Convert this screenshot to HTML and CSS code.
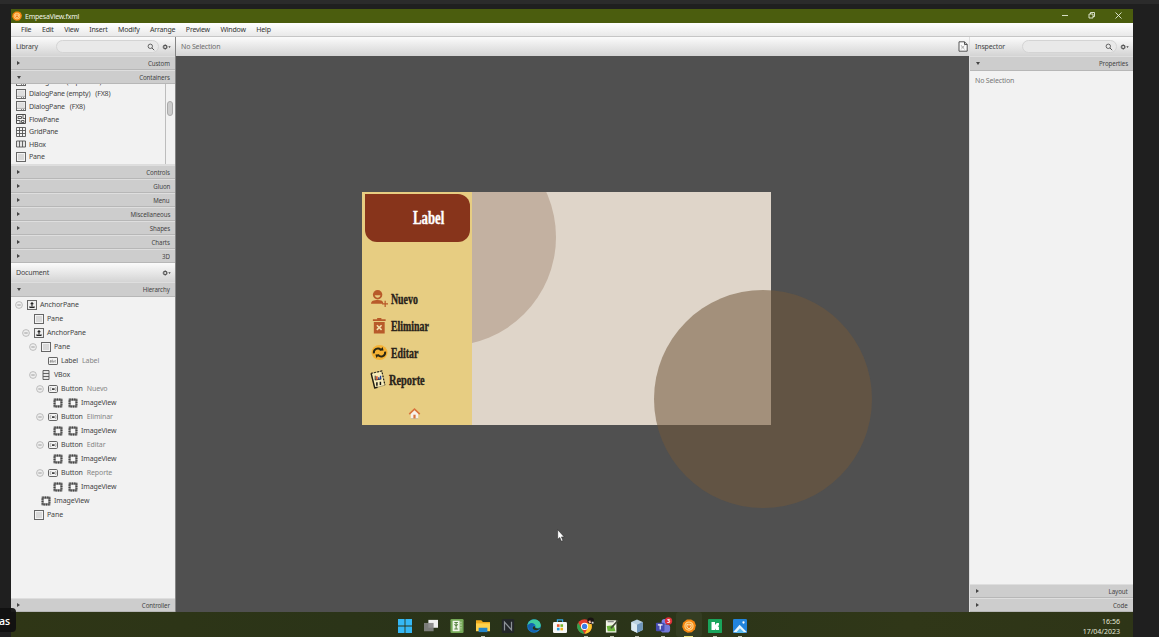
FILE: index.html
```html
<!DOCTYPE html>
<html lang="es">
<head>
<meta charset="utf-8">
<title>EmpesaView.fxml</title>
<link rel="stylesheet" href="styles.css">
</head>
<body>
<svg class="defs" width="0" height="0">
  <symbol id="pane" viewBox="0 0 10 10"><rect x=".5" y=".5" width="9" height="9" fill="#f4f4f4" stroke="#666"/><rect x="2" y="2" width="6" height="6" fill="#d9d9d9"/></symbol>
  <symbol id="dialog" viewBox="0 0 10 10"><rect x=".5" y=".5" width="9" height="9" fill="#f4f4f4" stroke="#666"/><rect x="1.5" y="1.5" width="7" height="5" fill="#dedede"/><path d="M1 7.300h8" stroke="#888" stroke-width=".7"/><path d="M5 8.500h1M7 8.500h1" stroke="#666" stroke-width=".8"/></symbol>
  <symbol id="flow" viewBox="0 0 10 10"><path d="M.5.5h9v9h-9z" fill="#f4f4f4" stroke="#4b4b4b"/><path d="M2 2.500h3.500v2H2zM7 1v3.500h2M1 6.500h3v3M5.500 6.500H8v2H5.500z" fill="none" stroke="#4b4b4b" stroke-width=".9"/></symbol>
  <symbol id="grid" viewBox="0 0 10 10"><path d="M.5.5h9v9h-9zM.5 3.5h9M.5 6.5h9M3.5.5v9M6.5.5v9" fill="#f4f4f4" stroke="#555" stroke-width=".9"/></symbol>
  <symbol id="hbox" viewBox="0 0 10 10"><path d="M.5 2h9v6h-9zM3.5 2v6M6.5 2v6" fill="#e6e6e6" stroke="#555" stroke-width=".9"/></symbol>
  <symbol id="vbox" viewBox="0 0 10 10"><path d="M2 .5h6v9H2zM2 3.5h6M2 6.5h6" fill="#e6e6e6" stroke="#555" stroke-width=".9"/></symbol>
  <symbol id="anchor" viewBox="0 0 10 10"><rect x=".5" y=".5" width="9" height="9" fill="#eee" stroke="#666"/><path d="M5 2v6M3.600 3.600h2.800M3 6.300v1.200h4V6.300" fill="none" stroke="#222" stroke-width="1.1"/></symbol>
  <symbol id="label" viewBox="0 0 10 10"><rect x=".5" y="1.5" width="9" height="7" rx=".6" fill="#f4f4f4" stroke="#555" stroke-width=".9"/><path d="M2 4.5h1.3v1.7H2V5.4h1M4.4 3.6v2.6h1.2V4.7M7.800 4.600h-1v1.500h1" fill="none" stroke="#777" stroke-width=".6"/></symbol>
  <symbol id="button" viewBox="0 0 10 10"><rect x=".5" y="1.5" width="9" height="7" rx="1.2" fill="#f4f4f4" stroke="#555" stroke-width=".9"/><path d="M3.400 3.700H2.200v2.600h1.200M7 3.700h1v2.600H7" fill="none" stroke="#888" stroke-width=".6"/><path d="M4 4.200h2.600v1.800H4z" fill="#444"/></symbol>
  <symbol id="image" viewBox="0 0 10 10"><path d="M1.500 1.500h7v7h-7z" fill="#f6f6f6" stroke="#8a8a8a" stroke-width="1.900"/><path d="M1.500 1.500h7v7h-7z" fill="none" stroke="#444" stroke-width="1.900" stroke-dasharray="1.170"/><path d="M2.500 2.500h5v5h-5z" fill="none" stroke="#666" stroke-width=".4"/></symbol>
  <symbol id="minus" viewBox="0 0 8 8"><circle cx="4" cy="4" r="3.400" fill="#eee" stroke="#b0b0b0" stroke-width=".8"/><path d="M2.300 4h3.400" stroke="#888" stroke-width=".8"/></symbol>
  <symbol id="glass" viewBox="0 0 8 8"><circle cx="3.300" cy="3.300" r="2.200" fill="none" stroke="#555" stroke-width=".9"/><path d="M5 5l2.200 2.200" stroke="#555" stroke-width="1"/></symbol>
  <symbol id="gear" viewBox="0 0 9 8"><circle cx="3.200" cy="4" r="1.600" fill="none" stroke="#555" stroke-width="1.100"/><path d="M3.200 1.300v.8M3.200 5.900v.8M.5 4h.8M5.100 4h.8M1.300 2.100l.6.6M4.500 5.300l.6.6M1.300 5.900l.6-.6M4.500 2.700l.6-.6" stroke="#555" stroke-width=".8"/><path d="M6.300 3.300h2.400L7.500 4.900z" fill="#444"/></symbol>
  <symbol id="builder" viewBox="0 0 16 16"><path d="M5.600.6h4.800l3.900 2.300 1.500 4.300-1 4.500-3.500 3.300-4.900.6-4.100-2.300L.2 9l.9-4.700z" fill="#f6860f"/><circle cx="8" cy="8.100" r="4.700" fill="#fb9d2c" stroke="#ffd890" stroke-width="1.200"/><path d="M5.700 6l1.100.7h2.400l1.100-.7v3.300L8 11.300 5.700 9.300z" fill="#f37b16" stroke="#ffe9bd" stroke-width="1"/></symbol>
</svg>

<div class="top-strip"></div>
<main class="window">
  <header class="titlebar">
    <svg class="app-icon"><use href="#builder"/></svg>
    <span class="title">EmpesaView.fxml</span>
    <svg class="win-buttons" viewBox="0 0 62 10"><path d="M0 5.500h6M53.500 2.500l6 6M59.500 2.500l-6 6" stroke="#e8eedb" stroke-width=".9"/><path d="M27 4h4v4h-4zM28.500 4V2.500h4v4H31" fill="none" stroke="#e8eedb" stroke-width=".9"/></svg>
  </header>
  <nav class="menubar"><span>File</span><span>Edit</span><span>View</span><span>Insert</span><span>Modify</span><span>Arrange</span><span>Preview</span><span>Window</span><span>Help</span></nav>

  <div class="workspace">
    <aside class="side left">
      <div class="bar"><span>Library</span><div class="search"><svg><use href="#glass"/></svg></div><svg class="gear"><use href="#gear"/></svg></div>
      <div class="section"><i class="tri"></i><span>Custom</span></div>
      <div class="section"><i class="tri open"></i><span>Containers</span></div>
      <div class="library">
        <div class="items">
          <div class="item"><svg><use href="#dialog"/></svg><span>DialogPane (expanded)</span></div>
          <div class="item"><svg><use href="#dialog"/></svg><span>DialogPane (empty)</span><span>(FX8)</span></div>
          <div class="item"><svg><use href="#dialog"/></svg><span>DialogPane</span><span>(FX8)</span></div>
          <div class="item"><svg><use href="#flow"/></svg><span>FlowPane</span></div>
          <div class="item"><svg><use href="#grid"/></svg><span>GridPane</span></div>
          <div class="item"><svg><use href="#hbox"/></svg><span>HBox</span></div>
          <div class="item"><svg><use href="#pane"/></svg><span>Pane</span></div>
        </div>
        <div class="scroll"><div class="thumb"></div></div>
      </div>
      <div class="section"><i class="tri"></i><span>Controls</span></div>
      <div class="section"><i class="tri"></i><span>Gluon</span></div>
      <div class="section"><i class="tri"></i><span>Menu</span></div>
      <div class="section"><i class="tri"></i><span>Miscellaneous</span></div>
      <div class="section"><i class="tri"></i><span>Shapes</span></div>
      <div class="section"><i class="tri"></i><span>Charts</span></div>
      <div class="section"><i class="tri"></i><span>3D</span></div>
      <div class="bar"><span>Document</span><svg class="gear"><use href="#gear"/></svg></div>
      <div class="section tall"><i class="tri open"></i><span>Hierarchy</span></div>
      <div class="tree">
        <div class="node d0"><svg class="fold"><use href="#minus"/></svg><svg><use href="#anchor"/></svg><span>AnchorPane</span></div>
        <div class="node d1 leaf"><svg><use href="#pane"/></svg><span>Pane</span></div>
        <div class="node d1"><svg class="fold"><use href="#minus"/></svg><svg><use href="#anchor"/></svg><span>AnchorPane</span></div>
        <div class="node d2"><svg class="fold"><use href="#minus"/></svg><svg><use href="#pane"/></svg><span>Pane</span></div>
        <div class="node d3 leaf"><svg><use href="#label"/></svg><span>Label</span><em>Label</em></div>
        <div class="node d2"><svg class="fold"><use href="#minus"/></svg><svg><use href="#vbox"/></svg><span>VBox</span></div>
        <div class="node d3"><svg class="fold"><use href="#minus"/></svg><svg><use href="#button"/></svg><span>Button</span><em>Nuevo</em></div>
        <div class="node d4"><svg><use href="#image"/></svg><svg><use href="#image"/></svg><span>ImageView</span></div>
        <div class="node d3"><svg class="fold"><use href="#minus"/></svg><svg><use href="#button"/></svg><span>Button</span><em>Eliminar</em></div>
        <div class="node d4"><svg><use href="#image"/></svg><svg><use href="#image"/></svg><span>ImageView</span></div>
        <div class="node d3"><svg class="fold"><use href="#minus"/></svg><svg><use href="#button"/></svg><span>Button</span><em>Editar</em></div>
        <div class="node d4"><svg><use href="#image"/></svg><svg><use href="#image"/></svg><span>ImageView</span></div>
        <div class="node d3"><svg class="fold"><use href="#minus"/></svg><svg><use href="#button"/></svg><span>Button</span><em>Reporte</em></div>
        <div class="node d4"><svg><use href="#image"/></svg><svg><use href="#image"/></svg><span>ImageView</span></div>
        <div class="node d2 leaf"><svg><use href="#image"/></svg><span>ImageView</span></div>
        <div class="node d1 leaf"><svg><use href="#pane"/></svg><span>Pane</span></div>
      </div>
      <div class="section"><i class="tri"></i><span>Controller</span></div>
    </aside>

    <section class="center">
      <div class="bar selection"><span>No Selection</span>
        <svg class="doc" viewBox="0 0 10 11"><path d="M1 .8h5.500l2.700 2.700v6.700H1z" fill="#fafafa" stroke="#444" stroke-width=".9"/><path d="M6.500.8v2.700h2.700" fill="none" stroke="#444" stroke-width=".9"/><path d="M3 4l3.500 4.500M6.500 4.500L3 8.500M3 6h3" stroke="#999" stroke-width=".6"/></svg>
      </div>
      <div class="canvas">
        <div class="form">
          <div class="arc"></div>
          <div class="drawer">
            <div class="banner"><span class="fat">Label</span></div>
            <div class="actions">
              <div class="action"><svg viewBox="0 0 18 18"><g fill="#b85a2a"><circle cx="7" cy="5" r="5"/><path d="M0 14.500c0-3 3-4 7-4s6 1 6 4z"/></g><path d="M4 5.500h6c-.5 3.500-5.500 3.500-6 0z" fill="#e7cd82"/><path d="M15 11.500v6.500M11.700 14.800h6.300" stroke="#b85a2a" stroke-width="1.300"/></svg><span class="fat">Nuevo</span></div>
              <div class="action"><svg viewBox="0 0 18 18"><path d="M2 2.500h13.500v1.700H2zM6.500 1h4.500v2H6.500zM3 5.200h11.500V17.500H3z" fill="#b85a2a"/><path d="M6.200 8.700l5 5M11.200 8.700l-5 5" stroke="#f2dfac" stroke-width="1.700"/></svg><span class="fat">Eliminar</span></div>
              <div class="action"><svg viewBox="0 0 18 18"><ellipse cx="9" cy="9" rx="8.500" ry="8" fill="#f6b233"/><path d="M3 10c-.5-5 4.500-6.500 7.500-4M15 8c.5 5-4.500 6.500-7.500 4" fill="none" stroke="#2b2814" stroke-width="2.100"/><path d="M9 7.200l4.300-.2-1-3.800zM9 10.800l-4.300.2 1 3.800z" fill="#2b2814"/></svg><span class="fat">Editar</span></div>
              <div class="action report"><svg viewBox="0 0 18 20"><path d="M1.200 3.500L12.500 1l3.300 15L5 19z" fill="#f7ebb8" stroke="#6d6340" stroke-width=".5"/><path d="M1.200 3.500L5 19l3-.8" fill="none" stroke="#211d12" stroke-width="1.500"/><path d="M1.200 3.500L12.500 1l3.300 15" fill="none" stroke="#211d12" stroke-width="1.200" stroke-dasharray="1.800 1.500"/><path d="M5.500 6v4.500l6.500-1" fill="none" stroke="#222" stroke-width="1"/><path d="M7.300 6.500v3.700" stroke="#d34a25" stroke-width="1.600"/><path d="M9.300 7.500v2.500M11.200 6v3.500" stroke="#22409a" stroke-width="1.400"/><path d="M7.300 13v3.500M11 12.300v3.500" stroke="#111" stroke-width="1.600"/></svg><span class="fat">Reporte</span></div>
            </div>
            <svg class="home" viewBox="0 0 14 14"><path d="M3 7l4-4 4 4v5.500H3z" fill="#f7f1ea"/><path d="M1.300 7.700L7 2.300l5.700 5.400" fill="none" stroke="#d9733d" stroke-width="1.600"/><path d="M5.800 8.300h2.400v4.200H5.800z" fill="#d9733d"/><path d="M3 12.500h8" stroke="#b9a98f" stroke-width=".6"/></svg>
          </div>
        </div>
        <div class="disc"></div>
        <svg class="cursor" viewBox="0 0 8 13"><path d="M.7.700v9.600l2.100-1.900 1.600 3.900 1.600-.7-1.600-3.700h2.800z" fill="#fff" stroke="#222" stroke-width=".5"/></svg>
      </div>
    </section>

    <aside class="side right">
      <div class="bar"><span>Inspector</span><div class="search"><svg><use href="#glass"/></svg></div><svg class="gear"><use href="#gear"/></svg></div>
      <div class="section tall"><i class="tri open"></i><span>Properties</span></div>
      <div class="empty">No Selection</div>
      <div class="section"><i class="tri"></i><span>Layout</span></div>
      <div class="section"><i class="tri"></i><span>Code</span></div>
    </aside>
  </div>

  <footer class="taskbar">
    <div class="apps">
      <div class="app"><svg viewBox="0 0 16 16"><path d="M0 0h7.500v7.500H0zM8.500 0H16v7.500H8.500zM0 8.500h7.500V16H0zM8.500 8.500H16V16H8.500z" fill="#35b8f5"/></svg></div>
      <div class="app"><svg viewBox="0 0 16 16"><path d="M5 1h11v9H5z" fill="#f0f0f0"/><path d="M0 4.500h11V14H0z" fill="#858585" opacity=".9"/></svg></div>
      <div class="app"><svg viewBox="0 0 16 16"><rect x=".5" width="15" height="16" rx="1.500" fill="#75a957"/><path d="M3 2h8v12H3z" fill="#eff5e7"/><path d="M5 4h4M5 11.500h4M7 4v8M5 6l2 2 2-2" stroke="#568341" stroke-width="1.200" fill="none"/><path d="M12.500 3v10" stroke="#dcebd0" stroke-dasharray="2 1"/></svg></div>
      <div class="app run"><svg viewBox="0 0 16 16"><path d="M0 1.500h6l2 2h8v10H0z" fill="#eda91d"/><path d="M0 5h16v9H0z" fill="#ffd24c"/><path d="M3 10h10v5H3z" fill="#2586c9"/></svg></div>
      <div class="app"><svg viewBox="0 0 16 16"><rect x="1" width="14" height="16" rx="1.500" fill="#232629"/><path d="M4 13V3.500L12 12.500V3" fill="none" stroke="#8d9298" stroke-width="1.400"/></svg></div>
      <div class="app"><svg viewBox="0 0 16 16"><circle cx="8" cy="8" r="7.800" fill="#1681cf"/><path d="M.5 7C2-2 15-1.500 15.800 7c0 3.500-5 4-6 2 1-3-4-6-9.300-2z" fill="#3fcba0"/><path d="M1 7c4-4 7-2 8 0-4 0-4 6 3 6-4 4-11 1-11-6z" fill="#1562b0"/><path d="M9 8c-1 2 2 4 6.500 2.300C14 13 8 14 6.500 10.500c0-1.500 1-2.500 2.500-2.500z" fill="#263317"/></svg></div>
      <div class="app"><svg viewBox="0 0 16 16"><path d="M5 4V1h6v3" fill="none" stroke="#35a6e8" stroke-width="1.300"/><rect y="3.500" width="16" height="12.500" rx="1.500" fill="#f7f7f7"/><path d="M4.500 6h3v3h-3z" fill="#e9532d"/><path d="M8.500 6h3v3h-3z" fill="#77b82a"/><path d="M4.500 10h3v3h-3z" fill="#259dde"/><path d="M8.500 10h3v3h-3z" fill="#f5b51d"/></svg></div>
      <div class="app run"><svg class="wide" viewBox="0 0 18 18"><circle cx="8" cy="10" r="7.700" fill="#e33e2e"/><path d="M1.300 6L8 17.700A7.700 7.700 0 0 1 1.300 6z" fill="#32a350"/><path d="M8 6.500h6.900A7.700 7.700 0 0 1 8 17.700l3.500-6z" fill="#fbc82e"/><circle cx="8" cy="10" r="3.800" fill="#fff"/><circle cx="8" cy="10" r="2.800" fill="#3b7de8"/><circle cx="14.500" cy="4" r="3.500" fill="#191313"/><path d="M12 4.500l2-1 1 2.500-2 1z" fill="#f1b599"/><path d="M15.500 5h2v2h-2z" fill="#ddd"/></svg></div>
      <div class="app run"><svg viewBox="0 0 16 16"><path d="M1 1.500h12v14H1z" fill="#f1f3e6"/><path d="M2 8l8-1 2 7H3z" fill="#6bb33b"/><path d="M3 3h7" stroke="#8a8a8a" stroke-width="1.500"/><path d="M6 10l8-9 1.500 1.200-8 9z" fill="#434a38"/></svg></div>
      <div class="app run"><svg viewBox="0 0 16 16"><path d="M8 .5l6.500 3v9L8 15.800l-6.500-3.300v-9z" fill="#b9d0e0"/><path d="M1.500 3.500l6.500 3v9.300l-6.500-3.300z" fill="#dbe9f1"/><path d="M8 6.500l6.500-3v9L8 15.800z" fill="#6f96bb"/></svg></div>
      <div class="app run"><svg class="wide" viewBox="0 0 18 18"><circle cx="10" cy="5" r="3" fill="#7b83eb"/><rect x="6" y="8" width="10" height="8.500" rx="3" fill="#7379d7"/><rect x="1" y="6" width="9" height="9" rx="1" fill="#454bb0"/><path d="M3 8.300h5M5.500 8.300v5" stroke="#fff" stroke-width="1.200"/><circle cx="14.300" cy="4.200" r="3.900" fill="#dc2f3b"/><text x="14.300" y="6.500" text-anchor="middle" class="badge">3</text></svg></div>
      <div class="app run active"><svg><use href="#builder"/></svg></div>
      <div class="app run"><svg viewBox="0 0 16 16"><rect width="16" height="16" rx="1" fill="#19a45b"/><path d="M4 3.500h4v3.300L10 4.500h2.500v3L11 8l1.500 1v3.500H9l-1-2v2H4z" fill="#fff"/></svg></div>
      <div class="app run"><svg viewBox="0 0 16 16"><rect width="16" height="16" rx="1.500" fill="#2184dd"/><path d="M0 15L7.500 6.500 16 15z" fill="#e6f5ff"/><path d="M3 16l5-5.500 5.500 5.500z" fill="#59baf0"/><circle cx="12" cy="4" r="1.300" fill="#fff"/></svg></div>
    </div>
    <div class="clock"><span>16:56</span><span>17/04/2023</span></div>
  </footer>
</main>
<div class="caption">as</div>
</body>
</html>
```

FILE: styles.css
```css
* { box-sizing: border-box; }
body {
  margin: 0;
  width: 1159px;
  height: 637px;
  overflow: hidden;
  background: #1f1f1f;
  color: #444;
  font: 7px/10px "Noto Sans", "Open Sans", sans-serif;
}
svg { display: block; flex: none; overflow: visible; }
span, em { white-space: pre; }
.defs { position: absolute; }
.top-strip { height: 4px; background: #2b2b2b; }
.window { margin: 5px 0 0 11px; width: 1122px; height: 628px; display: flex; flex-direction: column; }

.titlebar { height: 14px; background: #4b5d0e; display: flex; align-items: center; padding: 0 9px 0 1px; color: #f1f4e8; }
.app-icon { width: 10px; height: 10px; margin-right: 3px; }
.title { padding-top: 1px; letter-spacing: -.22px; }
.win-buttons { width: 62px; height: 10px; margin-left: auto; margin-top: -2px; }

.menubar { height: 14px; display: flex; align-items: center; gap: 10.600px; padding: 1px 0 0 10px; background: linear-gradient(#fff, #e9e9e9); border-bottom: 1px solid #c6c6c6; color: #333; letter-spacing: -.21px; }

.workspace { height: 575px; display: flex; background: #505050; }
.side { width: 164px; display: flex; flex-direction: column; background: #f2f2f2; }
.center { width: 794px; border-left: 1px solid #858585; display: flex; flex-direction: column; }
.right { border-left: 1px solid #dedede; }

.bar { height: 19px; flex: none; display: flex; align-items: center; padding: 0 4px 0 5px; background: linear-gradient(#fbfbfb, #d4d4d4); letter-spacing: -.15px; }
.bar > span { padding-top: 1px; }
.search { width: 103px; height: 13px; margin-left: auto; border: 1px solid #d4d4d4; border-radius: 7px; background: #e9e9e9; display: flex; align-items: center; justify-content: flex-end; padding-right: 3px; }
.right .search { width: 95px; }
.search svg { width: 8px; height: 8px; }
.gear { width: 9px; height: 8px; margin-left: 3px; }
.bar > span + .gear { margin-left: auto; }
.selection { color: #6d6d6d; }
.doc { width: 10px; height: 11px; margin: 0 -3px 0 auto; }

.section { height: 14px; flex: none; display: flex; align-items: center; justify-content: space-between; padding: 0 5px 0 6px; background: #cdcdcd; border-top: 1px solid #dedede; border-bottom: 1px solid #b7b7b7; }
.section span { padding-top: 1px; letter-spacing: -.1px; transform: scaleX(.88); transform-origin: right center; }
.section.tall { height: 15px; }
.tri { width: 0; height: 0; border-left: 3.500px solid #444; border-top: 2px solid transparent; border-bottom: 2px solid transparent; }
.tri.open { border-left: 2px solid transparent; border-right: 2px solid transparent; border-top: 3.500px solid #444; border-bottom: 0; }

.library { height: 81px; flex: none; display: flex; border-bottom: 1px solid #ddd; overflow: hidden; }
.items { width: 154px; margin-top: -9px; display: flex; flex-direction: column; }
.item { height: 12.600px; flex: none; display: flex; align-items: center; padding-left: 5px; letter-spacing: -.18px; }
.item svg { width: 10px; height: 10px; margin-right: 3px; }
.item span { padding-top: 1px; }
.item span + span { margin-left: 5px; }
.scroll { width: 10px; border-left: 1px solid #bdbdbd; padding: 17px 0 0 1px; }
.thumb { width: 6px; height: 15px; border: 1px solid #aaa; border-radius: 3px; background: #ccc; }

.tree { flex: 1; padding-top: 1px; }
.node { height: 14px; display: flex; align-items: center; letter-spacing: -.12px; }
.node svg { width: 10px; height: 10px; margin-right: 4px; }
.node .fold { width: 8px; height: 8px; }
.node svg + span { margin-left: -1px; }
.node em { margin-left: 4px; font-style: normal; color: #858585; }
.d0 { padding-left: 4px; }
.d1 { padding-left: 11px; }
.d2 { padding-left: 18px; }
.d3 { padding-left: 25px; }
.d4 { padding-left: 42px; }
.d4 svg:first-child { margin-right: 5px; }
.d1.leaf { padding-left: 23px; }
.d2.leaf { padding-left: 30px; }
.d3.leaf { padding-left: 37px; }
.empty { flex: 1; padding: 5px 5px; color: #777; letter-spacing: -.17px; }

.canvas { position: relative; flex: 1; background: #505050; }
.form { position: absolute; left: 186px; top: 135.500px; width: 409px; height: 233.500px; overflow: hidden; background: #dfd5c9; }
.arc { position: absolute; left: -24px; top: -64px; width: 218px; height: 218px; border-radius: 50%; background: #c3b1a1; }
.disc { position: absolute; left: 478px; top: 234px; width: 218px; height: 218px; border-radius: 50%; background: rgba(113, 87, 58, .55); }
.cursor { position: absolute; left: 381px; top: 473px; width: 8px; height: 13px; }
.drawer { position: relative; width: 110px; height: 100%; background: #e7cd82; padding: 2.500px 2px 0 3px; }
.banner { height: 48px; border-radius: 0 12px 12px 12px; background: #87341b; color: #fff; display: flex; align-items: center; padding-left: 48px; }
.fat { font: bold 18px/20px "Liberation Serif", serif; -webkit-text-stroke: .4px currentColor; transform: scaleX(.71); transform-origin: left center; }
.actions { margin-top: 42.500px; }
.action { height: 27px; display: flex; align-items: center; padding-left: 6px; color: #29231a; }
.action svg { width: 17px; height: 17px; margin-right: 3px; }
.action .fat { padding-top: 1px; font-size: 14.500px; transform: scaleX(.68); }
.action.report { padding-left: 5px; }
.action.report svg { width: 17px; height: 19px; margin-right: 2px; }
.action.report .fat { transform: scaleX(.715); }
.home { width: 13px; height: 13px; margin: 14px 0 0 43px; }

.taskbar { height: 25px; display: flex; padding-left: 381.500px; background: linear-gradient(90deg, #2f3616, #293319 45%, #303718 80%, #2e3517); }
.apps { display: flex; }
.app { position: relative; width: 25.770px; height: 25px; display: flex; align-items: center; justify-content: center; padding-top: 3px; }
.app svg { width: 14px; height: 14px; }
.app svg.wide { width: 17px; height: 17px; margin-top: -2px; }
.run::after { content: ""; position: absolute; left: 11px; bottom: 0; width: 4px; height: 1.500px; background: #b9bbaa; }
.active { background: #343d22; border-radius: 3px; }
.active::after { left: 8px; width: 9px; background: #e7dc7c; }
.badge { font: bold 6px "Noto Sans", sans-serif; fill: #fff; }
.clock { margin-left: auto; padding: 5px 13px 0 0; display: flex; flex-direction: column; align-items: flex-end; color: #e4e7da; font-size: 7px; line-height: 9.500px; }
.caption { position: absolute; left: 0; top: 608px; width: 16px; height: 24px; border-radius: 0 4px 4px 0; background: rgba(17, 17, 17, .95); color: #fff; font: 600 10.500px/27px "Open Sans", sans-serif; text-indent: -1px; }
```
